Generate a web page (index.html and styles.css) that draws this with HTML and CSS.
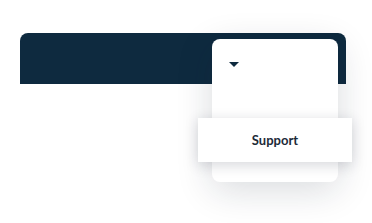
FILE: index.html
```html
<!DOCTYPE html>
<html>
<head>
<meta charset="utf-8">
<link rel="stylesheet" href="styles.css">
</head>
<body>
<div class="page">
  <div class="navbar"></div>
  <div class="dropdown">
    <span class="caret"></span>
    <div class="menu-item">Support</div>
  </div>
</div>
</body>
</html>
```
FILE: styles.css
```css
html, body {
  margin: 0;
  padding: 0;
  background: #ffffff;
  font-family: Lato, "Liberation Sans", sans-serif;
}
.page {
  position: relative;
  width: 372px;
  height: 223px;
  padding: 33px 26px 0 20px;
  box-sizing: border-box;
}
.navbar {
  height: 51px;
  background: #0e2a3f;
  border-radius: 8px 8px 0 0;
}
.dropdown {
  position: absolute;
  left: 212px;
  top: 39px;
  width: 126px;
  height: 143px;
  background: #ffffff;
  border-radius: 8px;
  box-shadow: 0 8px 36px rgba(20, 30, 50, 0.16);
}
.caret {
  position: absolute;
  left: 17px;
  top: 23px;
  width: 0;
  height: 0;
  border-left: 5px solid transparent;
  border-right: 5px solid transparent;
  border-top: 5px solid #0e2a3f;
}
.menu-item {
  position: absolute;
  left: -14px;
  top: 79px;
  width: 154px;
  height: 44px;
  display: flex;
  align-items: center;
  justify-content: center;
  background: #ffffff;
  box-shadow: 0 3px 14px rgba(20, 30, 50, 0.18);
  font-size: 13px;
  font-weight: 700;
  color: #1c2a38;
}
```
